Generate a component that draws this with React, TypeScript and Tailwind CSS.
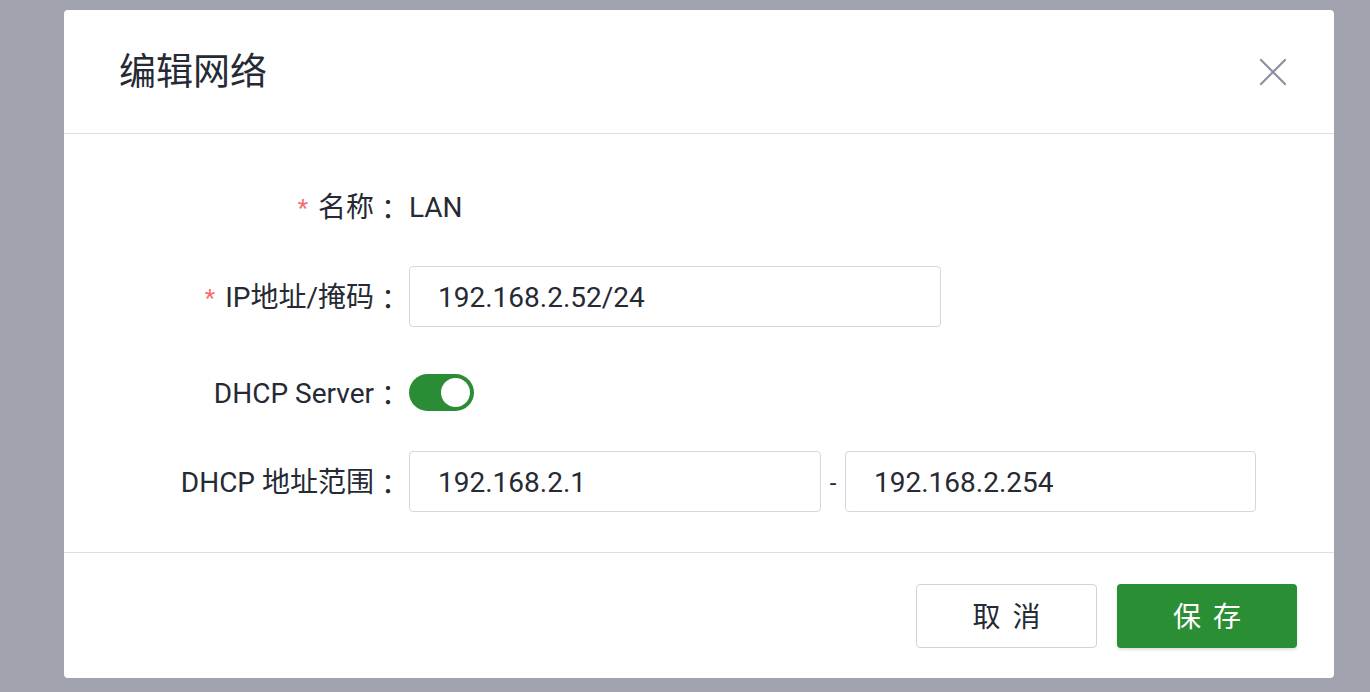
import { useState } from "react";

const font = { fontFamily: 'Roboto, "Noto Sans CJK SC", sans-serif' };
const colonFont = { fontFamily: '"Noto Sans CJK JP", sans-serif' };

function Label({ text, required }: { text: string; required?: boolean }) {
  return (
    <div className="w-[338px] mr-[7px] pt-[3px] shrink-0 flex items-center justify-end text-[28px] text-[#252a34]">
      {required && <span className="text-[#f56c6c] text-[24px] mr-[10px] leading-none">*</span>}
      <span>{text}</span>
      <span style={colonFont}>：</span>
    </div>
  );
}

function TextInput({ value, width }: { value: string; width: string }) {
  return (
    <div
      className={`${width} h-[61px] rounded-[4px] border border-[#d3d7de] bg-white flex items-center pl-[28px] pt-[3px] text-[28px] text-[#252a34]`}
    >
      {value}
    </div>
  );
}

export default function App() {
  const [dhcp, setDhcp] = useState(true);

  return (
    <div className="w-[1370px] h-[692px] bg-[#a1a4af] pt-[10px] pl-[64px]" style={font}>
      <div className="w-[1270px] h-[668px] bg-white rounded-[4px] flex flex-col">
        {/* Header */}
        <div className="h-[124px] shrink-0 flex items-center justify-between pl-[55px] pr-[46px] border-b border-[#dcdfe6]">
          <h1 className="text-[37px] text-[#252a34] font-normal pt-[3px]">编辑网络</h1>
          <button className="w-[30px] h-[30px] flex items-center justify-center">
            <svg width="28" height="28" viewBox="0 0 28 28" fill="none">
              <path d="M2 2 L26 26 M26 2 L2 26" stroke="#8b90a0" strokeWidth="2.2" strokeLinecap="round" />
            </svg>
          </button>
        </div>

        {/* Body */}
        <div className="flex-1 flex flex-col pt-[42px]">
          <div className="flex h-[60px] items-center">
            <Label text="名称" required />
            <span className="text-[28px] text-[#252a34] pt-[3px]">LAN</span>
          </div>

          <div className="flex h-[60px] items-center mt-[30px]">
            <Label text="IP地址/掩码" required />
            <TextInput value="192.168.2.52/24" width="w-[532px]" />
          </div>

          <div className="flex h-[60px] items-center mt-[36px]">
            <Label text="DHCP Server" />
            <button
              onClick={() => setDhcp(!dhcp)}
              className={`w-[65px] h-[37px] rounded-full flex items-center px-[4px] ${
                dhcp ? "bg-[#2a8c34] justify-end" : "bg-[#c0c4cc] justify-start"
              }`}
            >
              <span className="w-[29px] h-[29px] rounded-full bg-white block" />
            </button>
          </div>

          <div className="flex h-[61px] items-center mt-[29px]">
            <Label text="DHCP 地址范围" />
            <TextInput value="192.168.2.1" width="w-[412px]" />
            <span className="w-[24px] text-center text-[24px] text-[#252a34] pt-[3px]">-</span>
            <TextInput value="192.168.2.254" width="w-[411px]" />
          </div>
        </div>

        {/* Footer */}
        <div className="h-[126px] shrink-0 border-t border-[#dcdfe6] flex items-start justify-end pt-[31px] pr-[37px] gap-[20px]">
          <button className="w-[181px] h-[64px] rounded-[4px] border border-[#cfd3db] bg-white flex items-center justify-center gap-[12px] pt-[3px] text-[28px] text-[#252a34]">
            <span>取</span>
            <span>消</span>
          </button>
          <button className="w-[180px] h-[64px] rounded-[4px] bg-[#2a8e35] shadow-[0_2px_3px_rgba(0,0,0,0.12)] flex items-center justify-center gap-[12px] pt-[3px] text-[28px] text-white">
            <span>保</span>
            <span>存</span>
          </button>
        </div>
      </div>
    </div>
  );
}
